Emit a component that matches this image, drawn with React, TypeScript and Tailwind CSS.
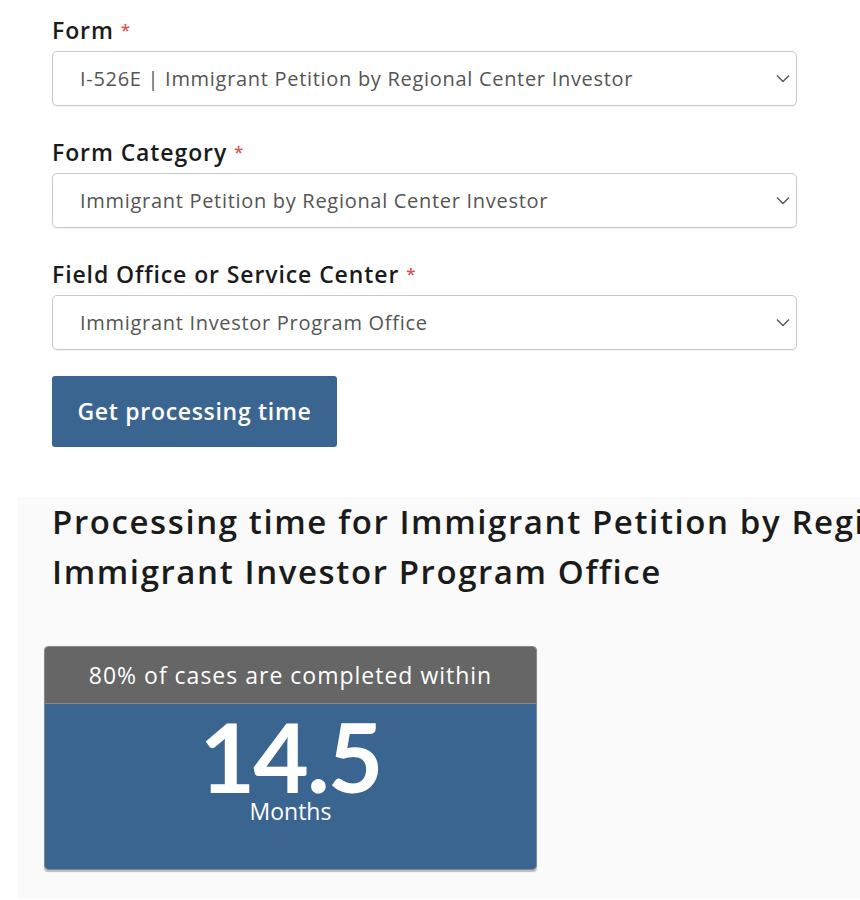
const FONT = "font-['Open_Sans','Lato',sans-serif]"

const Chevron = () => (
  <svg width="14" height="9" viewBox="0 0 14 9" fill="none" aria-hidden="true">
    <path d="M1 1.5 L7 7.5 L13 1.5" stroke="#555" strokeWidth="1.4" fill="none" />
  </svg>
)

type FieldProps = { label: string; value: string; first?: boolean }

const SelectField = ({ label, value, first }: FieldProps) => (
  <div className={first ? '' : 'mt-[30px]'}>
    <label className="mb-[5px] block text-[23px] leading-[32px] font-semibold tracking-[0.9px] text-[#1b1b1b]">
      {label} <span className="align-top text-[17px] text-[#d9534f]">*</span>
    </label>
    <div className="flex h-[55px] w-[745px] items-center justify-between rounded-[5px] border border-[#c9c9c9] bg-white pr-[6px] pl-[27px] shadow-[0_1px_1px_rgba(0,0,0,0.06)]">
      <span className="text-[20px] tracking-[0.7px] text-[#555]">{value}</span>
      <Chevron />
    </div>
  </div>
)

export default function App() {
  return (
    <div className={`${FONT} h-[900px] w-[860px] overflow-hidden bg-white`}>
      <div className="px-[52px] pt-[14px]">
        <SelectField
          first
          label="Form"
          value="I-526E | Immigrant Petition by Regional Center Investor"
        />
        <SelectField label="Form Category" value="Immigrant Petition by Regional Center Investor" />
        <SelectField label="Field Office or Service Center" value="Immigrant Investor Program Office" />

        <button className="mt-[26px] flex h-[71px] w-[285px] items-center justify-center rounded-[3px] bg-[#3b6591] text-[23px] font-semibold tracking-[0.7px] text-white">
          Get processing time
        </button>
      </div>

      <div className="mt-[50px] ml-[18px] h-[402px] w-[900px] bg-[#fafafa] pl-[26px]">
        <h2 className="pl-[8px] text-[33px] leading-[50px] font-semibold tracking-[1.6px] whitespace-nowrap text-[#1b1b1b]">
          Processing time for Immigrant Petition by Regional Center Investor at
          <br />
          Immigrant Investor Program Office
        </h2>

        <div className="mt-[49px] w-[493px] overflow-hidden rounded-[4px] border border-[#888] shadow-[0_2px_1px_rgba(0,0,0,0.25)]">
          <div className="flex h-[57px] items-center justify-center border-b border-[#8a8a8a] bg-[#666] text-[23px] tracking-[1px] text-white">
            80% of cases are completed within
          </div>
          <div className="flex h-[165px] flex-col items-center bg-[#3b6591] pt-[10px] text-white">
            <span className="font-['Lato',sans-serif] text-[96px] leading-[84px] font-bold tracking-[-2px]">
              14.5
            </span>
            <span className="text-[23px] leading-[26px]">Months</span>
          </div>
        </div>
      </div>
    </div>
  )
}
